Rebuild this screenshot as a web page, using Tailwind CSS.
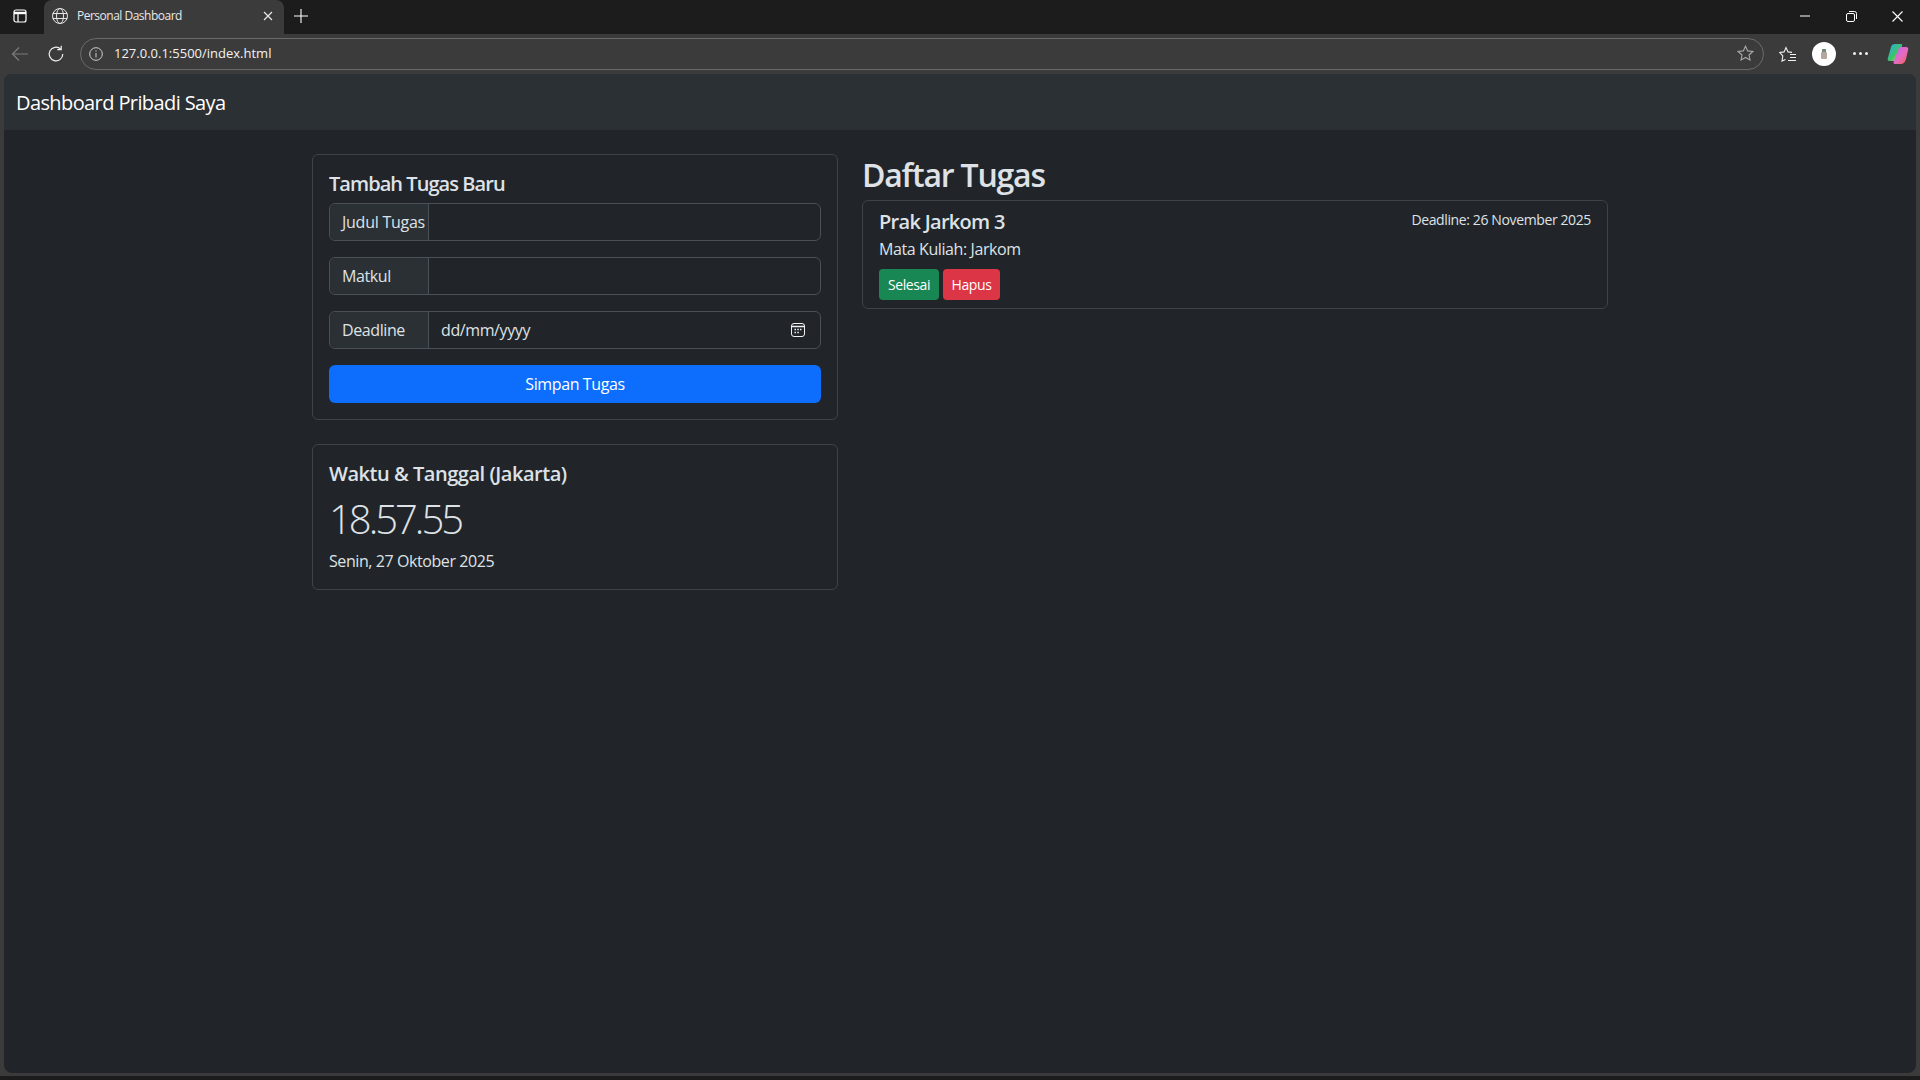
<!DOCTYPE html>
<html lang="id">
<head>
    <meta charset="UTF-8">
    <title>Personal Dashboard</title>
    <script src="https://cdn.jsdelivr.net/npm/@tailwindcss/browser@4"></script>
</head>
<body class="h-screen overflow-hidden bg-[#1c1c1c] font-['Open_Sans','Noto_Sans',sans-serif]">
    <div class="flex flex-col h-full">
        <!-- Tab strip -->
        <div class="flex items-center h-[34px] shrink-0 bg-[#1c1c1c] text-white">
            <div class="w-[40px] pb-[2px] flex justify-center">
                <svg width="14" height="14" viewBox="0 0 14 14" fill="none" stroke="#fff" stroke-width="1.2"><rect x="1" y="1" width="12" height="12" rx="2"/><path d="M1 4h12" stroke-width="2.4"/><path d="M5 4v9"/></svg>
            </div>
            <div class="ml-[4px] flex items-center w-[240px] h-full rounded-t-lg bg-[#3b3b3b] pl-[7px] pr-[11px] pb-[2px]">
                <svg width="18" height="18" viewBox="0 0 18 18" fill="none" stroke="#e4e4e4" stroke-width="1"><circle cx="9" cy="9" r="7.5"/><ellipse cx="9" cy="9" rx="3.5" ry="7.5"/><path d="M1.8 6.500h14.400M1.800 11.500h14.400"/></svg>
                <span class="ml-[8px] flex-1 text-[12px] tracking-[-0.5px] text-[#e8e8e8]">Personal Dashboard</span>
                <svg width="10" height="10" viewBox="0 0 10 10" stroke="#e8e8e8" stroke-width="1.2"><path d="M1 1l8 8M9 1l-8 8"/></svg>
            </div>
            <div class="w-[34px] pb-[2px] flex justify-center">
                <svg width="14" height="14" viewBox="0 0 14 14" stroke="#fff" stroke-width="1.1"><path d="M7 0v14M0 7h14"/></svg>
            </div>
            <div class="flex-1"></div>
            <div class="flex items-center pb-[2px]">
                <div class="w-[46px] flex justify-center"><svg width="10" height="2" viewBox="0 0 10 2" stroke="#fff"><path d="M0 1h10"/></svg></div>
                <div class="w-[46px] flex justify-center"><svg width="11" height="11" viewBox="0 0 11 11" fill="none" stroke="#fff"><rect x=".5" y="2.5" width="8" height="8" rx="1.5"/><path d="M3 .5h5.500a2 2 0 0 1 2 2V8"/></svg></div>
                <div class="w-[46px] flex justify-center"><svg width="11" height="11" viewBox="0 0 11 11" stroke="#fff" stroke-width="1.1"><path d="M.5.5l10 10M10.500.5l-10 10"/></svg></div>
            </div>
        </div>

        <div class="flex flex-col flex-1 bg-[#3b3b3b] px-[4px] pb-[3px]">
            <!-- Address bar -->
            <div class="flex items-center h-[40px] shrink-0 -mx-[4px] pb-[1px]">
                <div class="w-[40px] flex justify-center">
                    <svg width="18" height="16" viewBox="0 0 18 16" fill="none" stroke="#7c7c7c" stroke-width="1.2"><path d="M17 8H1.500M8 1.500L1.500 8 8 14.500"/></svg>
                </div>
                <div class="w-[32px] flex justify-center">
                    <svg width="18" height="18" viewBox="0 0 18 18" fill="none" stroke="#f0f0f0" stroke-width="1.2"><path d="M15.800 9a6.800 6.800 0 1 1-2.200-5"/><path d="M14.200 .8v3.900h-3.900"/></svg>
                </div>
                <div class="ml-[8px] flex items-center w-[1684px] h-[32px] rounded-full border border-[#6a6a6a]">
                    <svg class="ml-[8px]" width="14" height="14" viewBox="0 0 14 14" fill="none" stroke="#cfcfcf"><circle cx="7" cy="7" r="6.300"/><path d="M7 6v4.500M7 3.500v1.200"/></svg>
                    <span class="ml-[11px] flex-1 text-[13px] text-[#f2f2f2]">127.0.0.1:5500/index.html</span>
                    <svg class="mr-[9px]" width="17" height="17" viewBox="0 0 17 17" fill="none" stroke="#a8a8a8" stroke-width="1.100"><path d="M8.500 1.200l2.200 4.700 5.100.6-3.800 3.500 1 5-4.500-2.500-4.500 2.500 1-5L1.200 6.500l5.100-.6z"/></svg>
                </div>
                <div class="ml-[15px] w-[18px] flex justify-center">
                    <svg width="18" height="17" viewBox="0 0 18 17" fill="none" stroke="#f0f0f0" stroke-width="1.100"><path d="M6.500 14.500L3 16l.8-5L.8 7.500l4.300-.6L7 2.500l2 4.400 4 .5"/><path d="M11 9.500h6M11 12.500h6M9 15.500h8"/></svg>
                </div>
                <div class="ml-[15px] w-[24px] h-[24px] rounded-full bg-white flex justify-center items-center">
                    <svg width="8" height="10" viewBox="0 0 8 10"><rect x="2" y="0" width="4" height="3" fill="#6f8f7a"/><rect x="1" y="3" width="6" height="7" rx="1" fill="#b5a79e"/></svg>
                </div>
                <div class="ml-[14px] w-[20px] flex justify-center items-center gap-[3px]">
                    <span class="w-[3px] h-[3px] rounded-full bg-[#f0f0f0]"></span><span class="w-[3px] h-[3px] rounded-full bg-[#f0f0f0]"></span><span class="w-[3px] h-[3px] rounded-full bg-[#f0f0f0]"></span>
                </div>
                <div class="ml-[17px]">
                    <svg width="22" height="22" viewBox="0 0 22 22">
                        <defs>
                            <linearGradient id="cpA" x1="0" y1="0" x2="1" y2="1"><stop offset="0" stop-color="#2aa8f0"/><stop offset=".55" stop-color="#3cc468"/><stop offset="1" stop-color="#e8d23a"/></linearGradient>
                            <linearGradient id="cpB" x1="0" y1="0" x2="1" y2="1"><stop offset="0" stop-color="#b86af0"/><stop offset=".55" stop-color="#e86ac0"/><stop offset="1" stop-color="#f0603a"/></linearGradient>
                        </defs>
                        <path d="M8 1h6c1 0 1.500.6 1 1.800L11 15c-.8 2-2 3-4 3H2.500C1 18 .4 17 .7 15.800L4 4c.5-2 2-3 4-3z" fill="url(#cpA)"/>
                        <path d="M14 4h5c1.800 0 2.600 1.200 2.200 2.600L19 16c-.7 3-2.500 5-5.500 5H8c-1.300 0-1.800-1-1.400-2L11 7c.6-2 1.400-3 3-3z" fill="url(#cpB)"/>
                    </svg>
                </div>
            </div>

            <!-- Page -->
            <div class="flex-1 flex flex-col rounded-lg overflow-hidden bg-[#212529] text-[#dee2e6] text-[16px] leading-[24px] tracking-[-0.4px]">
                <nav class="flex items-center h-[56px] shrink-0 bg-[#2b3035] pl-[12px] pt-[2px]">
                    <span class="text-[20px] leading-[30px] tracking-[-0.6px] text-white">Dashboard Pribadi Saya</span>
                </nav>

                <div class="w-[1320px] mx-auto mt-[24px] flex">
                    <!-- Left column -->
                    <div class="w-[550px] px-[12px] flex flex-col gap-[24px]">
                        <div class="border border-[#3f4347] rounded-[6px] p-[16px]">
                            <h5 class="text-[20px] leading-[26px] font-semibold tracking-[-0.94px] mb-[6px]">Tambah Tugas Baru</h5>
                            <div class="flex h-[38px] mb-[16px] border border-[#495057] rounded-[6px]">
                                <div class="w-[99px] shrink-0 pl-[12px] leading-[36px] tracking-[-0.25px] whitespace-nowrap bg-[#2b3035] border-r border-[#495057] rounded-l-[6px]">Judul Tugas</div>
                                <input type="text" class="flex-1 min-w-0 px-[12px] bg-transparent outline-none">
                            </div>
                            <div class="flex h-[38px] mb-[16px] border border-[#495057] rounded-[6px]">
                                <div class="w-[99px] shrink-0 pl-[12px] leading-[36px] whitespace-nowrap bg-[#2b3035] border-r border-[#495057] rounded-l-[6px]">Matkul</div>
                                <input type="text" class="flex-1 min-w-0 px-[12px] bg-transparent outline-none">
                            </div>
                            <div class="flex h-[38px] mb-[16px] border border-[#495057] rounded-[6px]">
                                <div class="w-[99px] shrink-0 pl-[12px] leading-[36px] whitespace-nowrap bg-[#2b3035] border-r border-[#495057] rounded-l-[6px]">Deadline</div>
                                <div class="flex flex-1 items-center pl-[12px] pr-[15px]">
                                    <span class="flex-1">dd/mm/yyyy</span>
                                    <svg width="14" height="14" viewBox="0 0 14 14" fill="none" stroke="#f0f0f0"><rect x=".5" y=".5" width="13" height="13" rx="2.500"/><path d="M.5 3.500h13" stroke-width="1.500"/><path d="M3.500 6.500h1.500M6.300 6.500h1.500M9 6.500h1.500M3.500 9.500h1.500M6.300 9.500h1.500" stroke-width="1.500"/></svg>
                                </div>
                            </div>
                            <button class="w-full h-[38px] rounded-[6px] bg-[#0d6efd] text-white tracking-[-0.4px]">Simpan Tugas</button>
                        </div>

                        <div class="border border-[#3f4347] rounded-[6px] p-[16px]">
                            <h5 class="text-[20px] leading-[26px] font-semibold tracking-[-0.47px] mb-[6px]">Waktu &amp; Tanggal (Jakarta)</h5>
                            <div class="text-[40px] leading-[52px] font-light tracking-[-3px] mb-[4px]">18.57.55</div>
                            <p class="tracking-[-0.42px]">Senin, 27 Oktober 2025</p>
                        </div>
                    </div>

                    <!-- Right column -->
                    <div class="w-[770px] px-[12px]">
                        <h2 class="text-[32px] leading-[42px] font-semibold tracking-[-1.2px] mb-[4px]">Daftar Tugas</h2>
                        <div class="border border-[#3f4347] rounded-[6px] px-[16px] py-[8px]">
                            <div class="flex justify-between items-start">
                                <h5 class="text-[20px] leading-[26px] font-semibold tracking-[-0.7px] mb-[2px]">Prak Jarkom 3</h5>
                                <small class="text-[14px] leading-[21px] tracking-[-0.38px]">Deadline: 26 November 2025</small>
                            </div>
                            <p class="mb-[8px]">Mata Kuliah: Jarkom</p>
                            <div class="flex gap-[4px]">
                                <button class="h-[31px] w-[60px] rounded-[4px] bg-[#198754] text-white text-[14px] tracking-[-0.4px]">Selesai</button>
                                <button class="h-[31px] w-[57px] rounded-[4px] bg-[#dc3545] text-white text-[14px] tracking-[-0.4px]">Hapus</button>
                            </div>
                        </div>
                    </div>
                </div>
            </div>
        </div>
        <div class="h-[4px] shrink-0 bg-[#1c1c1c]"></div>
    </div>
</body>
</html>
